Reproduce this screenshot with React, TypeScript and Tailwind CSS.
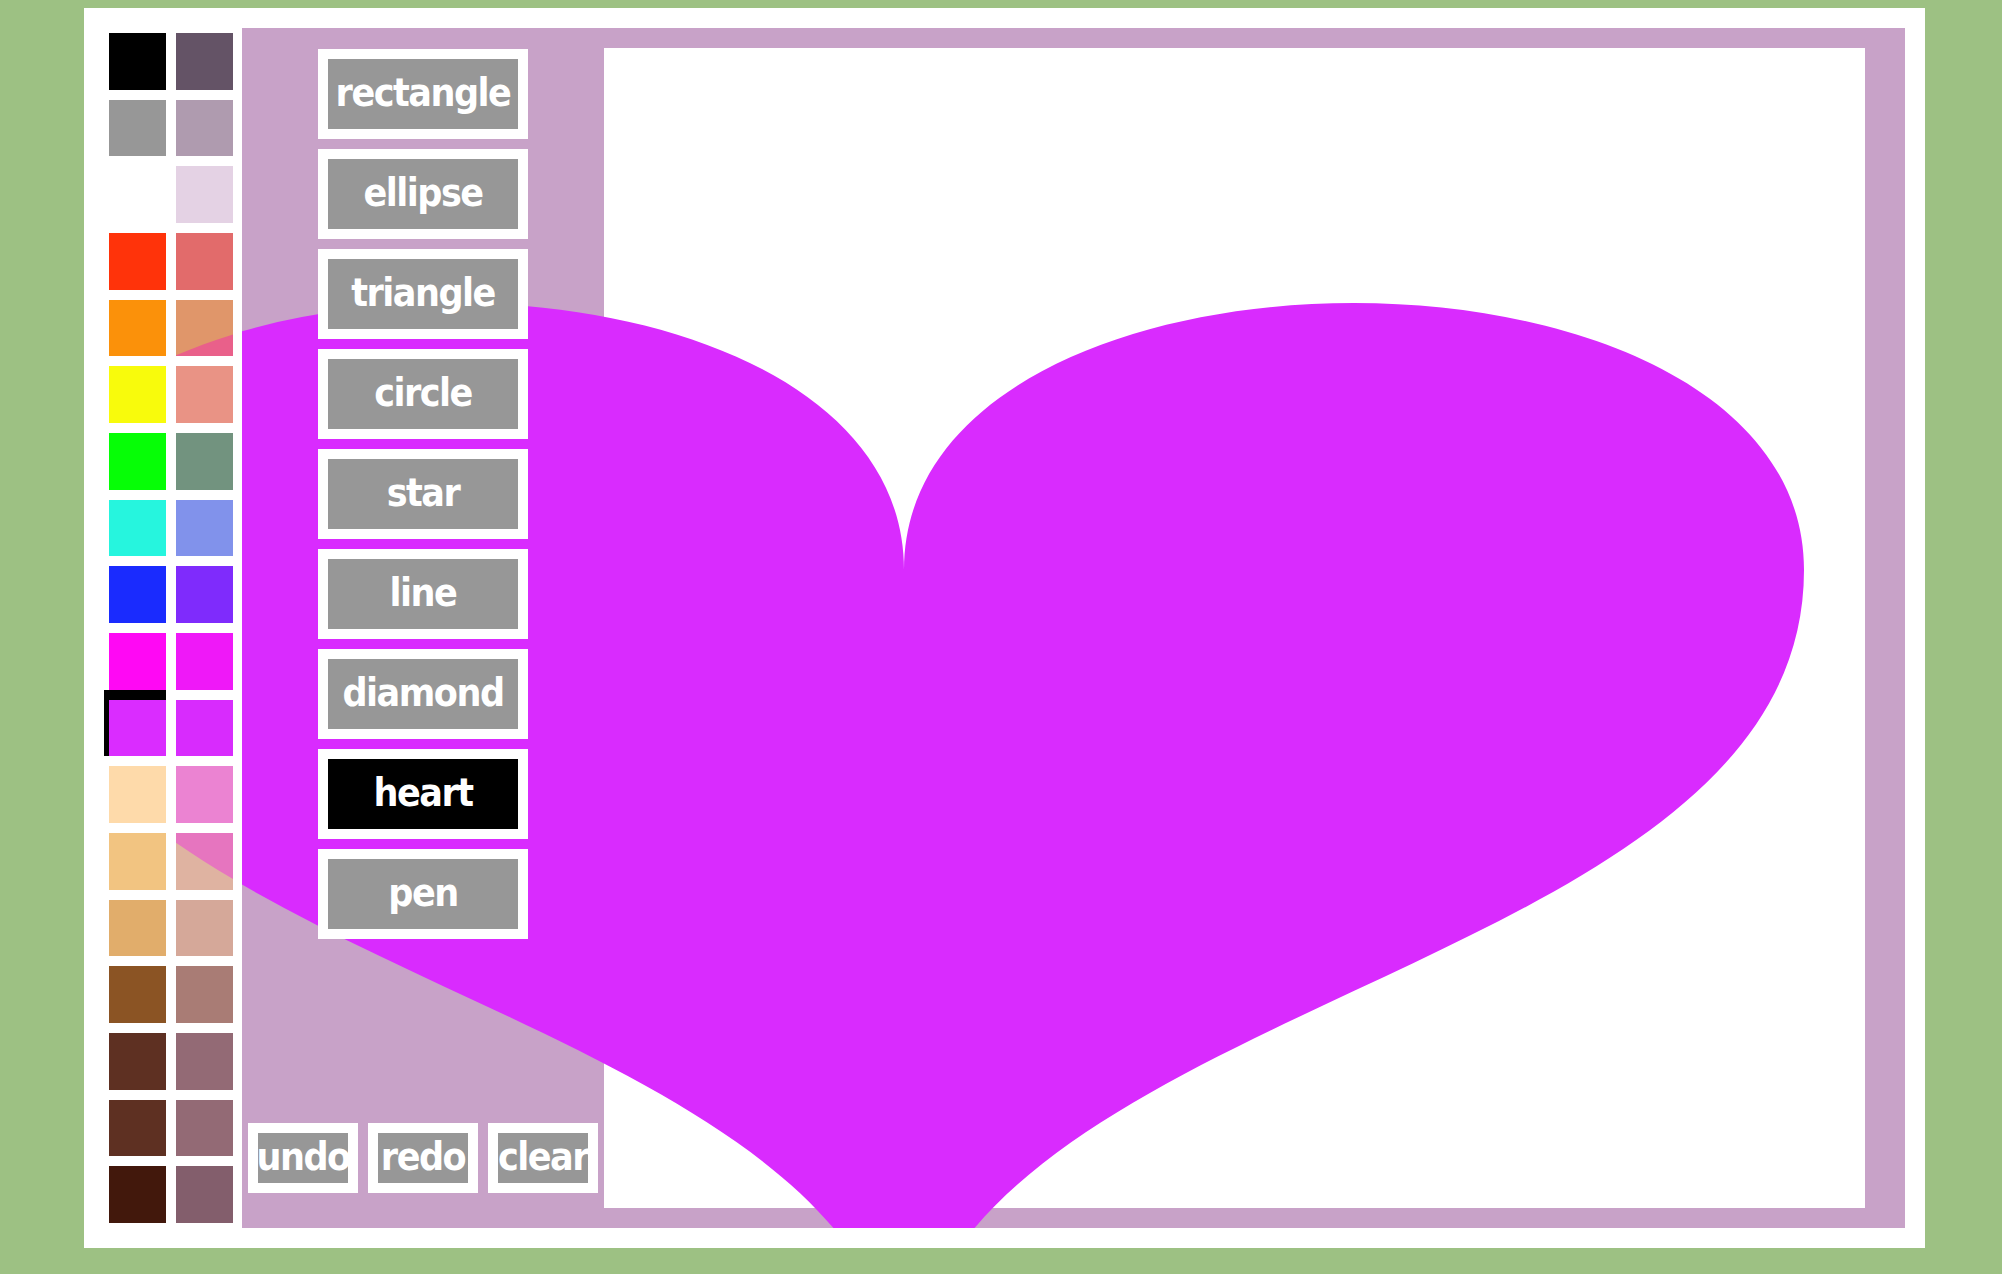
import React from 'react'

// heart drawn on the sketch surface, in page coordinates
const HEART =
  'M904 570C904 214 4 214 4 570C4 991 904 991 904 1412C904 991 1804 991 1804 570C1804 214 904 214 904 570Z'

const SWATCHES: [string, string][] = [
  ['#000000', '#645366'],
  ['#979797', '#af9baf'],
  ['#ffffff', '#e4d2e4'],
  ['#ff330a', '#e26b6b'],
  ['#fb910a', '#e0966a'],
  ['#f8fb0c', '#e99385'],
  ['#06fe06', '#72937f'],
  ['#26f5de', '#8192eb'],
  ['#1a2bfe', '#7f2bfc'],
  ['#ff08f4', '#ef18f8'],
  ['#da2cff', '#d82bfd'],
  ['#fedaaa', '#eb83d2'],
  ['#f2c481', '#dfb3a1'],
  ['#e1ad6b', '#d5a899'],
  ['#8b5424', '#a97c75'],
  ['#5e3022', '#936a75'],
  ['#5e3022', '#936a75'],
  ['#42180c', '#835e6c'],
]

// second column is see-through where the heart edge crosses it
const THROUGH: Record<number, string> = { 4: '#e9608a', 12: '#e675bf' }

const TOOLS = ['rectangle', 'ellipse', 'triangle', 'circle', 'star', 'line', 'diamond', 'heart', 'pen']

const ROW_H = 1200 / 18

function Palette() {
  return (
    <div className="flex w-[158px] flex-col">
      {SWATCHES.map(([a, b], i) => (
        <div key={i} className="flex flex-1 gap-[9.5px] py-[5px] pl-[25px]">
          <div
            className={`w-[57px] ${i === 10 ? 'shadow-[-5px_0_0_0_#000,0_-10px_0_0_#000,-5px_-10px_0_0_#000]' : ''}`}
            style={{ backgroundColor: a }}
          />
          <div className="relative w-[57px]" style={{ backgroundColor: b }}>
            {THROUGH[i] && (
              <svg
                className="absolute inset-0 h-full w-full"
                viewBox={`175.5 ${33 + i * ROW_H} 57 ${ROW_H - 10}`}
                preserveAspectRatio="none"
              >
                <path d={HEART} fill={THROUGH[i]} />
              </svg>
            )}
          </div>
        </div>
      ))}
    </div>
  )
}

function Tools({ active }: { active: string }) {
  return (
    <div className="relative z-10 flex w-[362px] flex-col items-center pt-[21px] pb-[35px]">
      <div className="flex flex-col gap-[10px]">
        {TOOLS.map((t) => (
          <button
            key={t}
            className={`flex h-[90px] w-[210px] items-center justify-center border-[10px] border-white pb-[3px] text-[39px] font-bold leading-none tracking-[-1.5px] text-white ${
              t === active ? 'bg-black' : 'bg-[#979797]'
            }`}
          >
            {t}
          </button>
        ))}
      </div>
      <div className="mt-auto flex gap-[10px]">
        {['undo', 'redo', 'clear'].map((t) => (
          <button
            key={t}
            className="flex h-[70px] w-[110px] items-center justify-center overflow-visible border-[10px] border-white bg-[#979797] pb-[3px] text-[39px] font-bold leading-none tracking-[-1.5px] text-white"
          >
            {t}
          </button>
        ))}
      </div>
    </div>
  )
}

export default function App() {
  return (
    <div className="min-h-screen bg-[#9dc183] pt-[8px] pl-[84px] font-['DejaVu_Sans',sans-serif] [font-stretch:condensed]">
      <div className="flex h-[1240px] w-[1841px] bg-white py-[20px] pr-[20px]">
        <Palette />
        <div className="relative flex flex-1 overflow-hidden bg-[#c8a2c8]">
          <Tools active="heart" />
          <div className="my-[20px] mr-[40px] flex-1 bg-white" />
          <svg
            className="pointer-events-none absolute inset-0 h-full w-full"
            viewBox="242 28 1663 1200"
            preserveAspectRatio="none"
          >
            <path d={HEART} fill="#d92bfe" />
          </svg>
        </div>
      </div>
    </div>
  )
}
